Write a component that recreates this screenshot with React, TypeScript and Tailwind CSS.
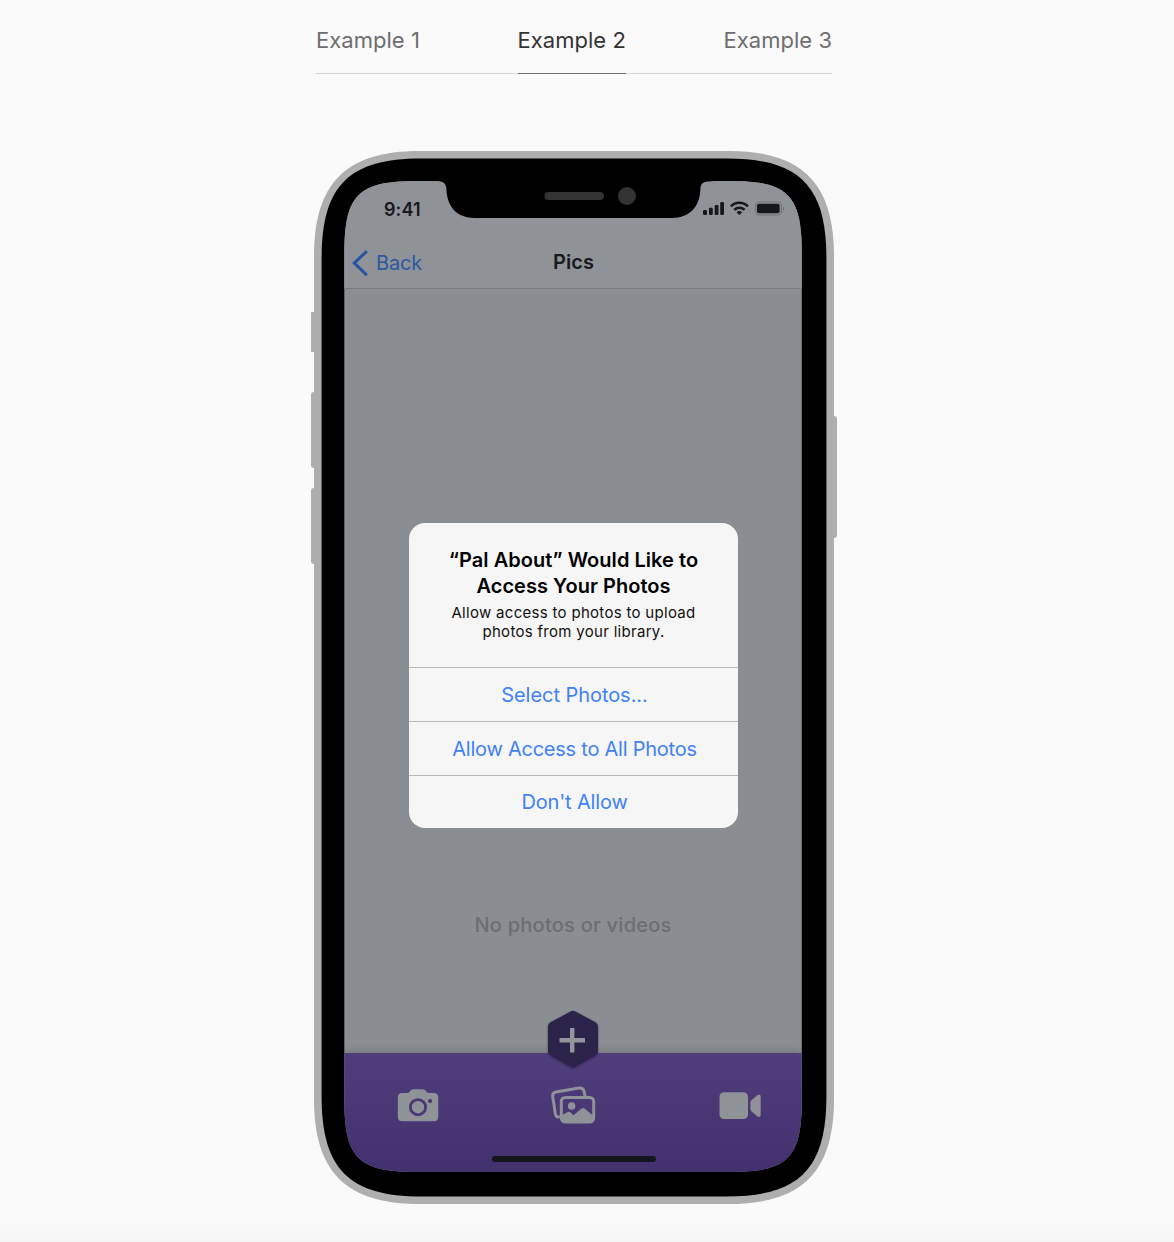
import React from "react";

const tabs = [
  { label: "Example 1", active: false },
  { label: "Example 2", active: true },
  { label: "Example 3", active: false },
];

function Tabs() {
  return (
    <nav className="flex h-[74px] w-[516px] justify-between border-b border-[#d6d6d6] text-[22px] leading-[30px] tracking-[0.03px]">
      {tabs.map((t) => (
        <a
          key={t.label}
          className={
            t.active
              ? "-mb-px flex h-[74px] border-b border-[#6a6a6a] pt-[25px] whitespace-nowrap text-[#333333]"
              : "flex h-[73px] pt-[25px] whitespace-nowrap text-[#6e6e6e]"
          }
        >
          {t.label}
        </a>
      ))}
    </nav>
  );
}

function Notch() {
  return (
    <svg className="absolute top-0 left-[90px]" width="280" height="38" viewBox="434 181 280 38">
      <path
        d="M434 181H438C443.500 181.400 446 183.500 446.400 189C447 206 456 218 475 218H672C690 218 700 206 700.400 189C700.600 183.500 703 181.400 709 181.400L714 181Z"
        fill="#000"
      />
      <rect x="544.500" y="192" width="59.500" height="8" rx="4" fill="#333" />
      <circle cx="627" cy="196" r="9" fill="#333" />
    </svg>
  );
}

function StatusIcons() {
  return (
    <svg width="84" height="20" viewBox="700 199 84 20" fill="#14181c">
      <rect x="703" y="210" width="4" height="5" rx="1.200" />
      <rect x="709" y="207.700" width="3.800" height="7.300" rx="1.200" />
      <rect x="714.700" y="205" width="3.800" height="10" rx="1.200" />
      <rect x="720.200" y="202" width="3.800" height="13" rx="1.200" />
      <g fill="none" stroke="#14181c" strokeWidth="2.600">
        <path d="M730.900 206.400C735.600 201.500 743 201.500 747.900 206.400" />
        <path d="M734.200 209.900C737.100 207.100 741.700 207.100 744.600 209.900" />
      </g>
      <path d="M736.500 212.200C738.200 210.700 740.500 210.700 742.200 212.200L739.350 215Z" />
      <rect x="755.600" y="202" width="25.800" height="13" rx="3.600" fill="none" stroke="#707378" strokeWidth="1.200" />
      <rect x="757" y="203.800" width="22.600" height="9.400" rx="1.800" />
      <path d="M783 206.400C784.500 207.200 784.500 210 783 210.800Z" fill="#707378" />
    </svg>
  );
}

function Header() {
  return (
    <header className="relative h-[108px] shrink-0 border-b border-[#76797d] bg-[#8f9296] text-[#17191c]">
      <div className="flex h-[54px] items-center justify-between pt-[2px] pr-[18px] pl-[40px]">
        <span className="text-[18px] font-semibold tracking-[0.1px]">9:41</span>
        <StatusIcons />
      </div>
      <div className="grid h-[54px] grid-cols-3 items-center">
        <div className="flex items-center gap-[8px] pt-[2px] pl-[8px] text-[20px] tracking-[-0.15px] text-[#2c58a4]">
          <svg width="16" height="26" viewBox="0 0 16 26" fill="none" stroke="#2553a4" strokeWidth="3" strokeLinecap="round">
            <path d="M14 2L2.300 13L14 24.300" strokeLinejoin="miter" />
          </svg>
          Back
        </div>
        <div className="pl-[1px] text-center text-[20px] font-semibold">Pics</div>
      </div>
      <Notch />
    </header>
  );
}

function AddButton() {
  return (
    <svg className="absolute -top-[46px] left-[199px]" width="60" height="66" viewBox="543 1007 60 66">
      <path
        d="M570.500 1011.500Q573 1010.200 575.500 1011.500L595.500 1022.300Q598 1023.600 598 1026.300V1051.300Q598 1053.700 595.500 1055.100L575.500 1066.300Q573 1067.600 570.500 1066.300L550.500 1055.100Q548 1053.700 548 1051.300V1026.300Q548 1023.600 550.500 1022.300Z"
        fill="#2c234b"
        className="drop-shadow-[0_1px_1px_rgba(0,0,0,0.45)]"
      />
      <path d="M572.200 1028V1052.500M559.500 1040.200H585" stroke="#92959a" strokeWidth="4.400" />
    </svg>
  );
}

function CameraIcon() {
  return (
    <svg width="42" height="34" viewBox="397 1088 42 34" fill="#8f9296">
      <path d="M402 1093H407Q408.700 1093 409.700 1091.500Q411 1089.200 413.500 1089.200H422.500Q425 1089.200 426.300 1091.500Q427.300 1093 429 1093H433.800Q438.300 1093 438.300 1097.500V1116.700Q438.300 1121.200 433.800 1121.200H402.300Q397.800 1121.200 397.800 1116.700V1097.500Q397.800 1093 402 1093Z" />
      <circle cx="418" cy="1107.200" r="7.600" stroke="#493675" strokeWidth="2.800" />
      <circle cx="430.100" cy="1101" r="2.100" fill="#493675" />
    </svg>
  );
}

function PhotosIcon() {
  return (
    <svg width="46" height="38" viewBox="550 1086 46 38" fill="none" stroke="#8f9296" strokeLinejoin="round">
      <path d="M558.700 1117Q556 1117.200 555.400 1114L552.700 1096.500Q552.300 1092.800 556 1092L579 1088.100Q583 1087.600 584 1091L585 1096" strokeWidth="3" strokeLinecap="round" />
      <rect x="561.300" y="1097.500" width="32.400" height="24.500" rx="4" strokeWidth="3" />
      <path d="M562 1115L567.400 1112.300Q569 1111.300 570.500 1112.500L573.500 1115.300L581.300 1108.800Q583 1107.300 585 1108.800L593.500 1116V1119Q593.500 1122 590 1122H565Q562 1122 562 1119Z" fill="#8f9296" stroke="none" />
      <circle cx="571.600" cy="1106" r="3.800" fill="#8f9296" stroke="none" />
    </svg>
  );
}

function VideoIcon() {
  return (
    <svg width="42" height="28" viewBox="719 1092 42 28" fill="#8f9296">
      <rect x="719.500" y="1092.300" width="28.500" height="26.700" rx="4.500" />
      <path d="M750.300 1103Q750.300 1101 751.800 1099.700L757.300 1095.200Q760.500 1093.300 760.700 1096.500V1115Q760.500 1118.200 757.300 1116.300L751.800 1111.800Q750.300 1110.500 750.300 1108.500Z" />
    </svg>
  );
}

function TabBar() {
  return (
    <footer className="relative h-[119px] shrink-0 bg-linear-to-b from-[#503d7c] to-[#42306f] shadow-[0_-1px_8px_rgba(60,60,80,0.3)]">
      <AddButton />
      <div className="flex h-[105px] items-start pt-[33px] pl-[53px]">
        <div className="mt-[2px]">
          <CameraIcon />
        </div>
        <div className="ml-[111px]">
          <PhotosIcon />
        </div>
        <div className="mt-[6px] ml-[123px]">
          <VideoIcon />
        </div>
      </div>
      <div className="ml-[148px] -mt-[2px] h-[6px] w-[164px] rounded-full bg-[#13171b]" />
    </footer>
  );
}

const actions = [
  { label: "Select Photos...", tracking: "tracking-[-0.05px]" },
  { label: "Allow Access to All Photos", tracking: "tracking-[-0.24px]" },
  { label: "Don't Allow", tracking: "tracking-[-0.15px]" },
];

function Alert() {
  return (
    <div className="flex w-[329px] flex-col overflow-hidden rounded-[16px] bg-[#f6f6f6] text-center text-black">
      <div className="h-[144px] pt-[24px] pl-[1px]">
        <h2 className="text-[20px] leading-[26px] font-semibold tracking-[0.04px]">
          “Pal About” Would Like to
          <br />
          Access Your Photos
        </h2>
        <p className="mt-[4px] text-[15px] leading-[19px] tracking-[0.3px] text-[#111]">
          Allow access to photos to upload
          <br />
          photos from your library.
        </p>
      </div>
      {actions.map((a) => (
        <button
          key={a.label}
          className={`flex h-[53.8px] items-center justify-center border-t border-[#b9b9bb] pt-[1px] pl-[3px] text-[20px] whitespace-nowrap text-[#3f82f7] ${a.tracking}`}
        >
          {a.label}
        </button>
      ))}
    </div>
  );
}

function Phone() {
  return (
    <div className="relative mt-[77px] h-[1053px] w-[520px]">
      <i className="absolute top-[161px] -left-[3px] h-[40px] w-[4px] bg-[#aeaeae]" />
      <i className="absolute top-[241px] -left-[3px] h-[76px] w-[6px] rounded-l-[3px] bg-[#aeaeae]" />
      <i className="absolute top-[337px] -left-[3px] h-[76px] w-[6px] rounded-l-[3px] bg-[#aeaeae]" />
      <i className="absolute top-[265px] -right-[3px] h-[122px] w-[6px] rounded-r-[3px] bg-[#aeaeae]" />
      <div className="h-[1053px] w-[520px] bg-[#aeaeae] p-[7px] [clip-path:path('M0_105C0_32_32_0_105_0H415C488_0_520_32_520_105V948C520_1021_488_1053_415_1053H105C32_1053_0_1021_0_948Z')]">
        <div className="h-[1039px] w-[506px] bg-black p-[23px] [clip-path:path('M0.6_100C0.6_27.500_28_0.400_100_0.400H405.500C478_0.400_505.400_27.500_505.400_100V938.500C505.400_1011_478_1038.500_405.500_1038.500H100C28_1038.500_0.600_1011_0.600_938.500Z')]">
          <div className="relative flex h-[991px] w-[458px] flex-col bg-[#8a8d91] [clip-path:path('M0.3_72C0.3_14_14.3_0_72_0H386C444_0_457.800_14_457.800_72V919C457.800_977_444_991_386_991H72C14.3_991_0.3_977_0.3_919Z')]">
            <Header />
            <main className="flex flex-1 items-end justify-center pb-[113px]">
              <p className="text-[20px] leading-[30px] font-medium tracking-[0.25px] text-[#6b6e72]">No photos or videos</p>
            </main>
            <TabBar />
            <div className="absolute inset-0 flex items-start justify-center pt-[342px]">
              <Alert />
            </div>
          </div>
        </div>
      </div>
    </div>
  );
}

export default function App() {
  return (
    <div className="h-[1242px] w-full overflow-hidden bg-[#fafafa] bg-[linear-gradient(to_bottom,#fafafa_1215px,#f5f5f5_1242px)] font-['Inter',sans-serif]">
      <div className="flex w-[1148px] flex-col items-center">
        <Tabs />
        <Phone />
      </div>
    </div>
  );
}
